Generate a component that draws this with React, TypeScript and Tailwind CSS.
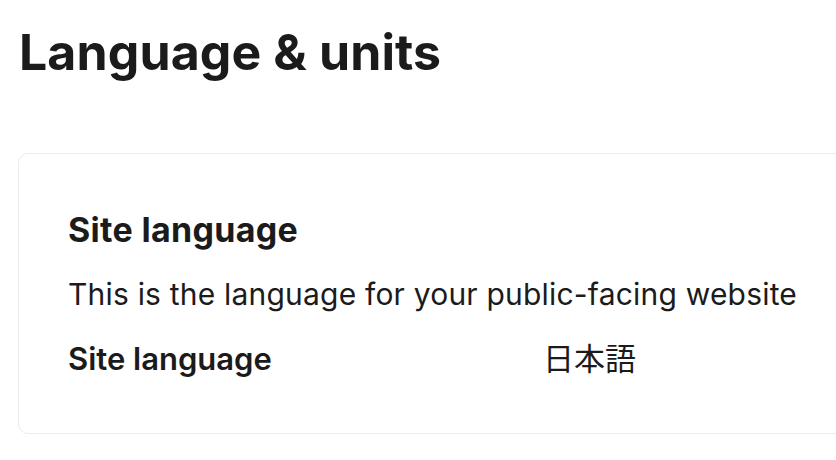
export default function App() {
  return (
    <main className="h-[460px] w-[836px] overflow-hidden bg-white text-[#1b1b1b] [font-family:Inter,'Noto_Sans_CJK_JP',sans-serif]">
      <h1 className="px-[19px] pt-[24px] text-[50px] font-bold leading-[56px] tracking-[0.1px]">
        Language &amp; units
      </h1>

      <section className="ml-[18px] mt-[73px] w-[900px] rounded-[10px] border border-[#ececec] px-[49px] pb-[54px] pt-[56px]">
        <h2 className="text-[34px] font-bold leading-[40px] tracking-[0.3px]">Site language</h2>
        <p className="mt-6 text-[30px] leading-[40px] tracking-[0.2px]">
          This is the language for your public-facing website
        </p>
        <div className="mt-[25px] flex text-[31px] leading-[40px]">
          <span className="w-[475px] font-semibold">Site language</span>
          <span>日本語</span>
        </div>
      </section>
    </main>
  );
}
